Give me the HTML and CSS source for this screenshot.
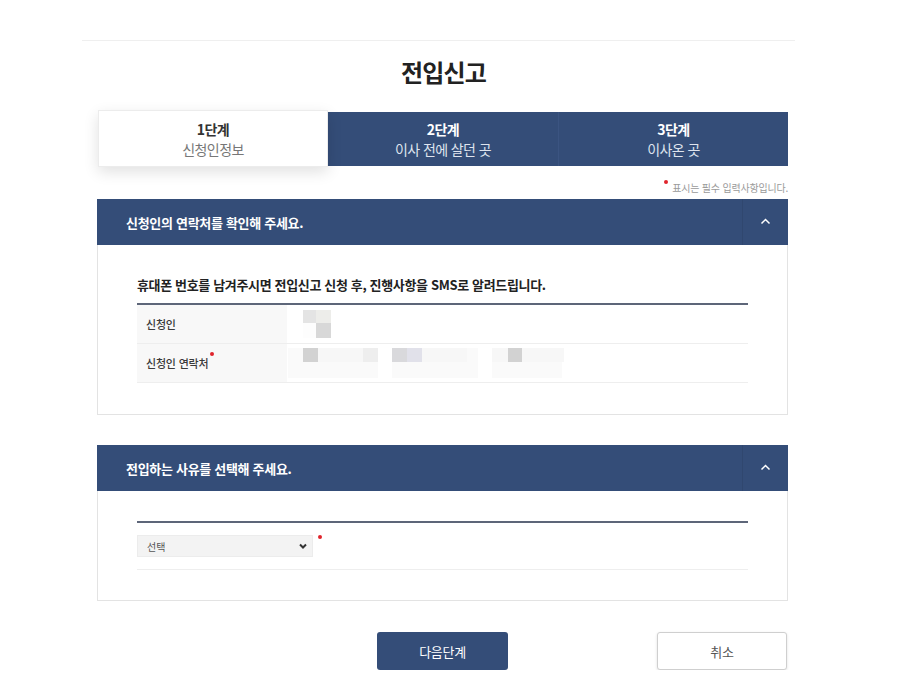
FILE: index.html
```html
<!DOCTYPE html>
<html lang="ko">
<head>
<meta charset="utf-8">
<title>전입신고</title>
<link rel="stylesheet" href="styles.css">
</head>
<body>
<div class="page">
  <div class="topline"></div>
  <h1 class="title">전입신고</h1>
  <div class="wrap">
    <div class="steps">
      <div class="step step-on"><strong>1단계</strong><span>신청인정보</span></div>
      <div class="step step-2"><strong>2단계</strong><span>이사 전에 살던 곳</span></div>
      <div class="step step-3"><strong>3단계</strong><span>이사온 곳</span></div>
    </div>
    <p class="req"><span class="dot"></span>표시는 필수 입력사항입니다.</p>

    <section class="panel">
      <div class="panel-head">
        <h2>신청인의 연락처를 확인해 주세요.</h2>
        <span class="toggle"><svg width="11" height="7" viewBox="0 0 11 7"><polyline points="1.5,5.5 5.5,1.5 9.5,5.5" fill="none" stroke="#fff" stroke-width="1.5"/></svg></span>
      </div>
      <div class="panel-body">
        <p class="lead">휴대폰 번호를 남겨주시면 전입신고 신청 후, 진행사항을 SMS로 알려드립니다.</p>
        <div class="info">
          <div class="row">
            <div class="label">신청인</div>
            <div class="value">
              <div class="blur b1">
                <span class="c c-a"></span><span class="c c-b"></span>
                <span class="c c-w"></span><span class="c c-c"></span>
              </div>
            </div>
          </div>
          <div class="row">
            <div class="label">신청인 연락처<span class="dot dot-l"></span></div>
            <div class="value">
              <div class="blur b2">
                <span class="seg s1"><span class="c c-d"></span><span class="c c-f"></span><span class="c c-f"></span><span class="c c-f"></span><span class="c c-e"></span></span>
                <span class="seg s2"><span class="c c-g"></span><span class="c c-h"></span><span class="c c-f"></span><span class="c c-f"></span><span class="c c-f"></span></span>
                <span class="seg s3"><span class="c c-f"></span><span class="c c-d"></span><span class="c c-f"></span><span class="c c-f"></span><span class="c c-f"></span></span>
              </div>
            </div>
          </div>
        </div>
      </div>
    </section>

    <section class="panel panel-2">
      <div class="panel-head">
        <h2>전입하는 사유를 선택해 주세요.</h2>
        <span class="toggle"><svg width="11" height="7" viewBox="0 0 11 7"><polyline points="1.5,5.5 5.5,1.5 9.5,5.5" fill="none" stroke="#fff" stroke-width="1.5"/></svg></span>
      </div>
      <div class="panel-body body-2">
        <div class="select-row">
          <span class="select"><span class="select-text">선택</span><svg class="caret" width="8" height="6" viewBox="0 0 8 6"><polyline points="1,1.5 4,4.5 7,1.5" fill="none" stroke="#333" stroke-width="2"/></svg></span><span class="dot dot-s"></span>
        </div>
      </div>
    </section>

    <div class="actions">
      <button class="btn btn-next">다음단계</button>
      <button class="btn btn-cancel">취소</button>
    </div>
  </div>
</div>
</body>
</html>
```

FILE: styles.css
```css
* {
  box-sizing: border-box;
}
html, body {
  margin: 0;
  padding: 0;
  background: #fff;
}
body {
  font-family: "Noto Sans CJK KR", "Noto Sans", sans-serif;
  color: #333;
  overflow: hidden;
}
.page {
  padding-top: 40px;
}
.topline {
  margin-left: 82px;
  width: 713px;
  border-top: 1px solid #efefef;
}
.title {
  margin: 0 0 24px;
  padding: 15px 10px 0 0;
  height: 47px;
  line-height: 32px;
  font-size: 24px;
  font-weight: 700;
  letter-spacing: -0.8px;
  text-align: center;
  color: #222;
}
.wrap {
  margin-left: 97px;
  width: 691px;
}
.steps {
  display: flex;
  height: 54px;
}
.step {
  flex: none;
  display: flex;
  flex-direction: column;
  align-items: center;
  justify-content: center;
  background: #344d78;
  color: #fff;
}
.step strong {
  font-size: 14px;
  line-height: 20px;
  font-weight: 700;
  letter-spacing: -0.5px;
}
.step span {
  font-size: 14px;
  line-height: 20px;
  letter-spacing: -0.6px;
  color: #dfe4ee;
}
.step-on {
  width: 230px;
  margin: -2px 0 -1px 1px;
  background: #fff;
  border: 1px solid #ececec;
  box-shadow: 0 5px 14px rgba(0, 0, 0, 0.12);
  position: relative;
  z-index: 1;
}
.step-on strong {
  color: #333;
}
.step-on span {
  color: #777;
}
.step-2 {
  width: 230px;
}
.step-3 {
  width: 230px;
  border-left: 1px solid #3b5481;
}
.req {
  margin: 0 0 5px;
  padding-top: 16px;
  height: 28px;
  line-height: 12px;
  font-size: 10px;
  letter-spacing: -0.2px;
  color: #9a9a9a;
  text-align: right;
}
.dot {
  display: inline-block;
  width: 4px;
  height: 4px;
  border-radius: 50%;
  background: #e0242c;
  vertical-align: top;
  margin-right: 4px;
  margin-top: -2px;
}
.panel-head {
  height: 46px;
  background: #344d78;
  display: flex;
  align-items: center;
}
.panel-head h2 {
  flex: 1;
  margin: 0;
  padding-left: 29px;
  font-size: 13px;
  font-weight: 700;
  letter-spacing: -0.3px;
  color: #fff;
}
.toggle {
  width: 46px;
  height: 46px;
  border-left: 1px solid #30476f;
  display: flex;
  align-items: center;
  justify-content: center;
  padding-bottom: 2px;
}
.panel-body {
  border: 1px solid #e3e3e3;
  border-top: 0;
  padding: 30px 39px 31px;
}
.lead {
  margin: 0 0 8px;
  line-height: 20px;
  font-size: 13px;
  font-weight: 700;
  letter-spacing: -0.35px;
  color: #222;
}
.info {
  border-top: 2px solid #5d6679;
}
.row {
  display: flex;
  height: 39px;
  border-bottom: 1px solid #eeeeee;
}
.label {
  width: 150px;
  padding-left: 9px;
  background: #f8f8f8;
  display: flex;
  align-items: center;
  font-size: 11px;
  font-weight: 500;
  letter-spacing: -0.2px;
  color: #3a3a3a;
}
.dot-l {
  align-self: flex-start;
  margin: 8px 0 0 2px;
}
.value {
  flex: 1;
  display: flex;
  align-items: center;
}
.blur {
  display: grid;
  filter: blur(0.6px);
}
.b1 {
  margin-left: 16px;
  grid-template-columns: 13px 15px;
  grid-template-rows: 13px 15px;
}
.b2 {
  display: flex;
  margin-left: 1px;
  height: 30px;
  gap: 14px;
}
.seg {
  display: grid;
  grid-template-columns: 15px 15px 15px 15px 15px;
  grid-template-rows: 14px 16px;
  background: #fafafa;
}
.s1 {
  padding-left: 15px;
  width: 90px;
}
.s2 {
  width: 86px;
}
.s3 {
  width: 70px;
  grid-template-columns: 16px 14px 14px 14px 14px;
}
.c {
  display: block;
}
.c-a { background: #e4e4e4; }
.c-b { background: #ededea; }
.c-w { background: #fdfdfd; }
.c-c { background: #d8d8d8; }
.c-d { background: #d2d2d2; }
.c-e { background: #eeeeee; }
.c-f { background: #f7f7f7; }
.c-g { background: #d9d9dc; }
.c-h { background: #e1e1ea; }
.panel-2 {
  margin-top: 30px;
}
.body-2 {
  padding-bottom: 30px;
}
.select-row {
  border-top: 2px solid #5d6679;
  border-bottom: 1px solid #eeeeee;
  padding: 12px 0;
  display: flex;
  align-items: flex-start;
}
.select {
  width: 176px;
  height: 22px;
  background: #f3f3f3;
  border: 1px solid #ececec;
  display: flex;
  align-items: center;
  justify-content: space-between;
  padding: 0 5px 0 9px;
}
.select-text {
  font-size: 10px;
  color: #555;
}
.dot-s {
  margin: 0 0 0 5px;
}
.actions {
  margin-top: 31px;
  display: flex;
  padding-left: 280px;
  gap: 149px;
}
.btn {
  width: 131px;
  height: 38px;
  border-radius: 3px;
  font-family: inherit;
  font-size: 13px;
  letter-spacing: -0.3px;
  cursor: pointer;
  padding: 0;
}
.btn-next {
  background: #344d78;
  color: #fff;
  border: 0;
}
.btn-cancel {
  width: 130px;
  background: #fff;
  color: #555;
  border: 1px solid #cfcfcf;
  box-shadow: 0 1px 3px rgba(0, 0, 0, 0.12);
  position: relative;
}
.btn-cancel::after {
  content: "";
  position: absolute;
  left: -15px;
  bottom: -4px;
  width: 131px;
  height: 3px;
  background: #cccccc;
}
```
